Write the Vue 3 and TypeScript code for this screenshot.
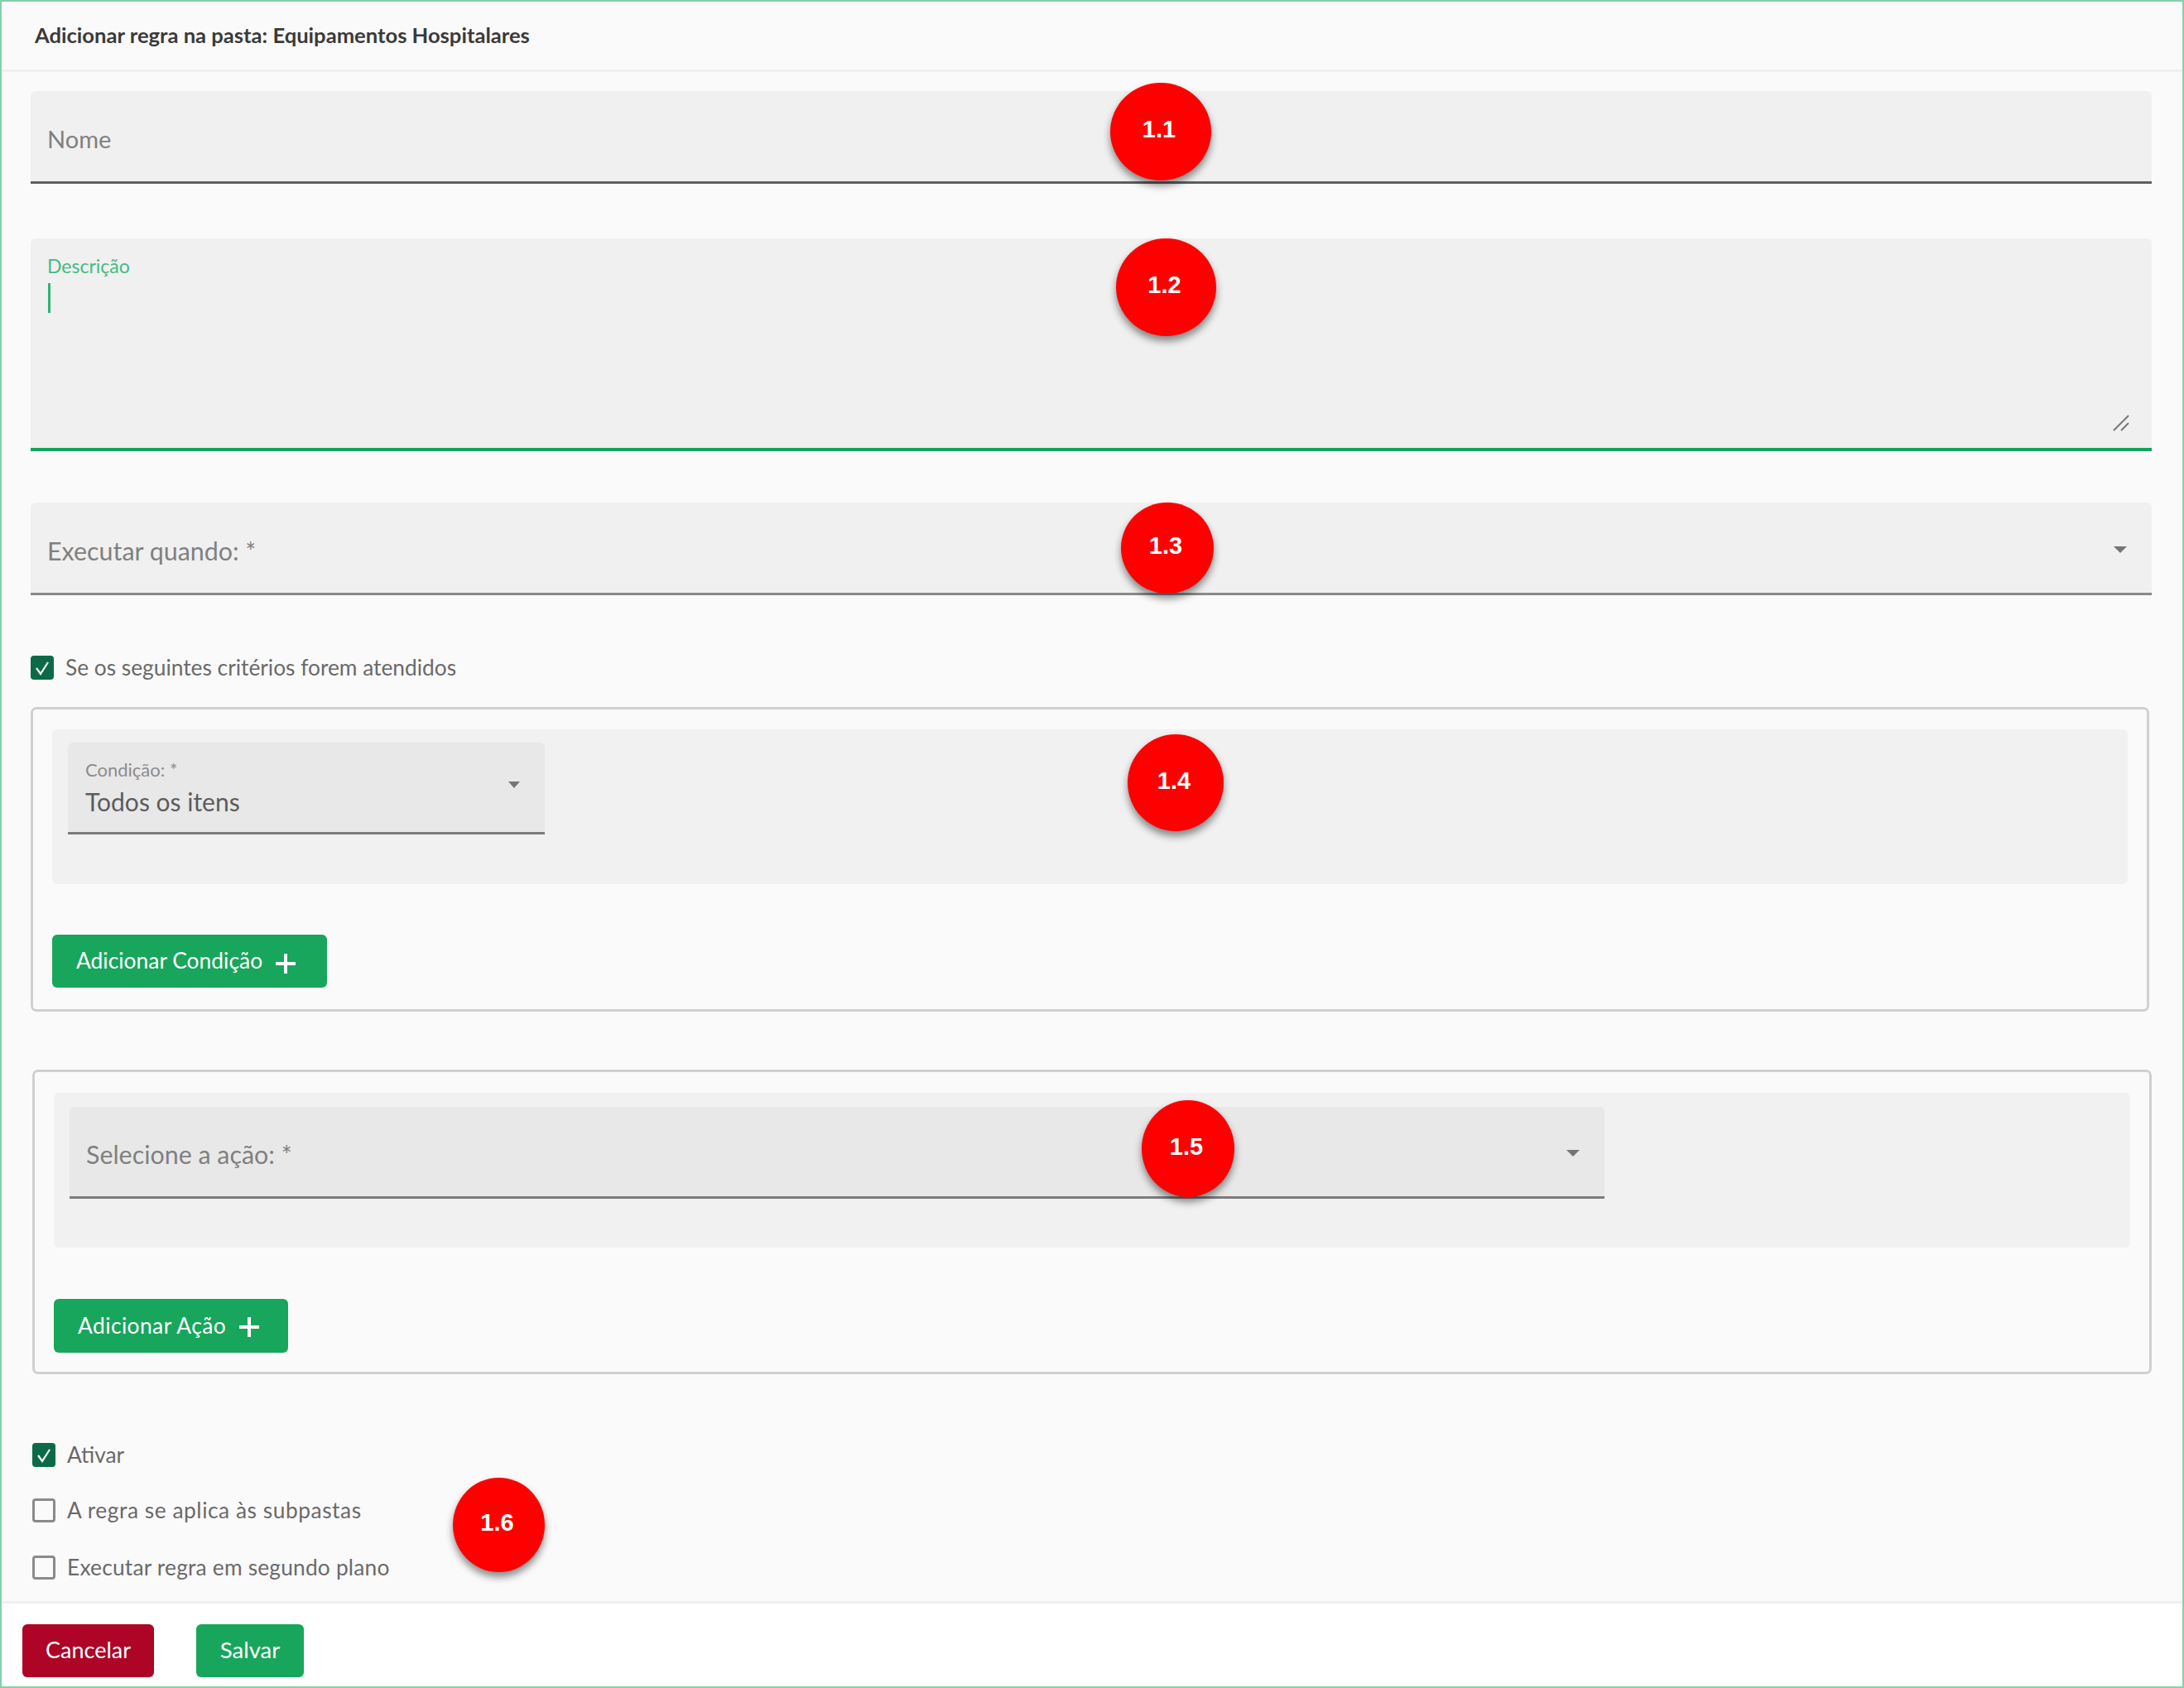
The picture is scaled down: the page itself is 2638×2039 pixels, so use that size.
<template>
  <div class="page">
    <header class="dialog-header">Adicionar regra na pasta: Equipamentos Hospitalares</header>

    <main class="dialog-body">
      <div class="field field-name">
        <span class="placeholder">Nome</span>
      </div>

      <div class="field field-desc">
        <span class="float-label">Descrição</span>
        <span class="caret"></span>
        <svg class="resize-handle" viewBox="0 0 20 20">
          <path d="M1 19 19 1M10 19 19 10" />
        </svg>
      </div>

      <div class="field field-exec">
        <span class="placeholder">Executar quando: *</span>
        <span class="arrow"></span>
      </div>

      <label class="check-row check-criteria">
        <span class="check is-on">
          <svg viewBox="0 0 28 29"><path d="M7 15l5 7 9-14" /></svg>
        </span>
        <span class="check-text">Se os seguintes critérios forem atendidos</span>
      </label>

      <section class="box box-condition">
        <div class="panel">
          <div class="field select select-condition">
            <span class="small-label">Condição: *</span>
            <span class="value">Todos os itens</span>
            <span class="arrow"></span>
          </div>
        </div>
        <button class="btn btn-add btn-add-condition">
          Adicionar Condição
          <svg class="plus" viewBox="0 0 28 28"><path d="M14 2v24M2 14h24" /></svg>
        </button>
      </section>

      <section class="box box-action">
        <div class="panel">
          <div class="field select select-action">
            <span class="placeholder">Selecione a ação: *</span>
            <span class="arrow"></span>
          </div>
        </div>
        <button class="btn btn-add btn-add-action">
          Adicionar Ação
          <svg class="plus" viewBox="0 0 28 28"><path d="M14 2v24M2 14h24" /></svg>
        </button>
      </section>

      <div class="options">
        <label v-for="opt in options" :key="opt.text" class="check-row">
          <span class="check" :class="{ 'is-on': opt.on }">
            <svg v-if="opt.on" viewBox="0 0 28 29"><path d="M7 15l5 7 9-14" /></svg>
          </span>
          <span class="check-text">{{ opt.text }}</span>
        </label>
      </div>
    </main>

    <footer class="dialog-footer">
      <button class="btn btn-cancel">Cancelar</button>
      <button class="btn btn-save">Salvar</button>
    </footer>

    <!-- marcadores numerados da documentacao -->
    <div
      v-for="b in badges"
      :key="b.label"
      class="badge"
      :style="{ left: b.x + 'px', top: b.y + 'px', width: b.w + 'px', height: b.h + 'px' }"
    >
      {{ b.label }}
    </div>
  </div>
</template>

<script setup lang="ts">
const options = [
  { text: 'Ativar', on: true },
  { text: 'A regra se aplica às subpastas', on: false },
  { text: 'Executar regra em segundo plano', on: false }
]

// posicao medida na imagem, menos a borda da pagina
const badges = [
  { label: '1.1', x: 1339, y: 98, w: 122, h: 118 },
  { label: '1.2', x: 1346, y: 286, w: 121, h: 118 },
  { label: '1.3', x: 1352, y: 605, w: 112, h: 110 },
  { label: '1.4', x: 1360, y: 885, w: 116, h: 117 },
  { label: '1.5', x: 1377, y: 1327, w: 112, h: 117 },
  { label: '1.6', x: 545, y: 1783, w: 111, h: 114 }
]
</script>

<style scoped>
.page {
  position: relative;
  box-sizing: border-box;
  width: 2638px;
  height: 2039px;
  display: flex;
  flex-direction: column;
  border: 2px solid #86d0a8;
  background: #fafafa;
  font-family: Lato, "Open Sans", sans-serif;
  color: #666;
  overflow: hidden;
}

.dialog-header {
  box-sizing: border-box;
  height: 85px;
  padding: 0 0 3px 40px;
  display: flex;
  align-items: center;
  font-size: 25.6px;
  font-weight: 700;
  color: #3a3a3a;
  border-bottom: 3px solid #f0f0f0;
}

.dialog-body {
  flex: 1;
  display: flex;
  flex-direction: column;
  padding: 0 37px 0 35px;
}

.field {
  position: relative;
  box-sizing: border-box;
  display: flex;
  align-items: center;
  padding: 6px 20px 0;
  background: #f0f0f0;
  border-bottom: 3px solid #5f5f5f;
  border-radius: 6px 6px 0 0;
}

.field-name {
  margin-top: 23px;
  height: 112px;
  flex: none;
}

.field-desc {
  margin-top: 66px;
  height: 257px;
  flex: none;
  display: block;
  padding-top: 19px;
  border-bottom: 4px solid #0fa55a;
}

.field-exec {
  margin-top: 62px;
  height: 112px;
  flex: none;
  border-bottom-color: #8a8a8a;
}

.placeholder {
  font-size: 30.4px;
  color: #808080;
}

.field-name .placeholder {
  font-size: 29px;
}

.float-label {
  display: block;
  font-size: 23px;
  color: #45bb80;
}

.caret {
  display: block;
  width: 3px;
  height: 36px;
  margin: 7px 0 0 1px;
  background: #2fb373;
}

.resize-handle {
  position: absolute;
  right: 27px;
  bottom: 20px;
  width: 20px;
  height: 20px;
  fill: none;
  stroke: #777;
  stroke-width: 2;
}

.arrow {
  position: absolute;
  right: 30px;
  top: 50%;
  margin-top: -2px;
  border-left: 8px solid transparent;
  border-right: 8px solid transparent;
  border-top: 8px solid #757575;
}

.check-row {
  display: flex;
  align-items: center;
  height: 29px;
  gap: 14px;
  font-size: 26.3px;
  color: #6a6a6a;
}

.check-text {
  padding-bottom: 2px;
}

.check-criteria {
  margin-top: 73px;
}

.check {
  box-sizing: border-box;
  flex: none;
  width: 28px;
  height: 29px;
  border: 3px solid #8a8a8a;
  border-radius: 4px;
}

.check.is-on {
  border: none;
  background: #0b6b48;
}

.check svg {
  display: block;
  width: 28px;
  height: 29px;
  fill: none;
  stroke: #fff;
  stroke-width: 2.2;
}

.box {
  box-sizing: border-box;
  flex: none;
  padding: 24px 23px 0;
  border: 3px solid #d0d0d0;
  border-radius: 7px;
}

.box-condition {
  margin: 33px 3px 0 0;
  height: 368px;
}

.box-action {
  margin: 70px 0 0 2px;
  height: 368px;
  padding-top: 25px;
}

.panel {
  box-sizing: border-box;
  height: 187px;
  padding: 16px 19px 0;
  background: #f1f1f1;
  border-radius: 6px;
}

.box-action .panel {
  padding-top: 17px;
}

.select {
  height: 111px;
  background: #e8e8e8;
  border-bottom-color: #7c7c7c;
}

.select-condition {
  width: 576px;
  display: block;
  padding: 20px 21px 0;
}

.select-condition .arrow {
  top: 47px;
  right: 30px;
  margin-top: 0;
  border-left-width: 7px;
  border-right-width: 7px;
}

.select-action {
  width: 1854px;
}

.small-label {
  display: block;
  font-size: 22px;
  line-height: 26px;
  color: #8c8c8c;
}

.value {
  display: block;
  margin-top: 5px;
  font-size: 30px;
  line-height: 40px;
  color: #5c5c5c;
}

.btn {
  display: inline-flex;
  align-items: center;
  box-sizing: border-box;
  height: 64px;
  border: none;
  border-radius: 6px;
  color: #fff;
  font-family: inherit;
  font-size: 26.4px;
}

.btn-add {
  margin-top: 61px;
  padding: 0 0 2px 29px;
  background: #17a65c;
}

.btn-add-condition {
  width: 332px;
}

.btn-add-condition .plus {
  margin-top: 8px;
}

.btn-add-action {
  width: 283px;
  height: 65px;
  margin-top: 62px;
  letter-spacing: 0.4px;
}

.plus {
  width: 28px;
  height: 28px;
  margin: 4px 0 0 14px;
  fill: none;
  stroke: #fff;
  stroke-width: 4;
}

.options {
  margin: 83px 0 0 2px;
  display: flex;
  flex-direction: column;
}

.options .check-row:nth-child(2) {
  margin-top: 38px;
  letter-spacing: 0.55px;
}

.options .check-row:nth-child(3) {
  margin-top: 40px;
  letter-spacing: 0.2px;
}

.dialog-footer {
  box-sizing: border-box;
  flex: none;
  height: 103px;
  display: flex;
  gap: 51px;
  padding: 25px 0 0 25px;
  background: #fff;
  border-top: 3px solid #f0f0f0;
}

.btn-cancel {
  width: 159px;
  justify-content: center;
  background: #ae0425;
  font-size: 27px;
  padding-bottom: 4px;
}

.btn-save {
  width: 130px;
  justify-content: center;
  background: #17a65c;
  font-size: 27.6px;
  padding-bottom: 4px;
}

.badge {
  position: absolute;
  display: flex;
  align-items: center;
  justify-content: center;
  padding: 0 4px 5px 0;
  box-sizing: border-box;
  border-radius: 50%;
  background: #ff0000;
  color: #fff;
  font-family: "Liberation Sans", Arial, sans-serif;
  font-size: 29px;
  font-weight: 700;
  box-shadow: 0 6px 10px rgba(0, 0, 0, 0.45);
}
</style>

<style>
html,
body {
  margin: 0;
  background: #fff;
}
</style>
